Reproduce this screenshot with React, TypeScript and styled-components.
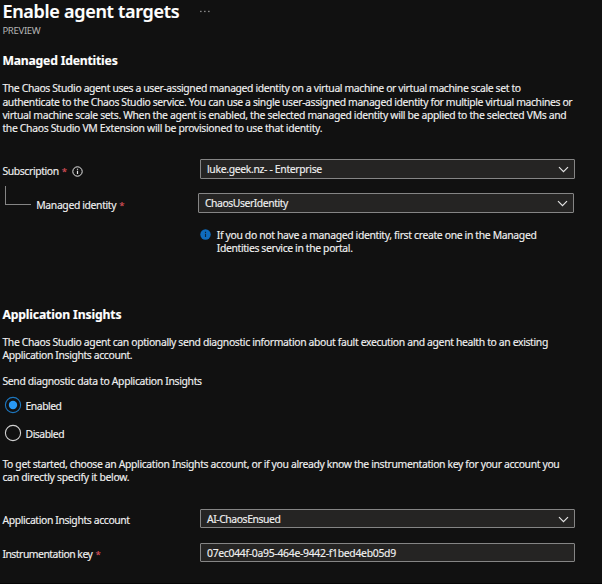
import React from 'react';
import styled, { createGlobalStyle } from 'styled-components';

const GlobalStyle = createGlobalStyle`
  * { box-sizing: border-box; }
  html, body { margin: 0; background: #111111; }
  body { overflow: hidden; }
`;

const Page = styled.main`
  display: flex;
  flex-direction: column;
  width: 602px;
  height: 584px;
  padding-left: 2.4px;
  overflow: hidden;
  background: #111111;
  border-bottom: 1px solid #060606;
  color: #f0f0f0;
  font-family: 'Noto Sans', 'Open Sans', sans-serif;
  font-size: 10.4px;
  line-height: 13.4px;
  -webkit-text-stroke: 0.15px currentColor;
`;

const Header = styled.header`
  display: flex;
  flex-direction: column;
  height: 53.1px;
`;

const TitleRow = styled.div`
  display: flex;
  align-items: center;
  gap: 20.5px;
  height: 22px;
`;

const Title = styled.h1`
  margin: 0;
  color: #ffffff;
  font-size: 18px;
  font-weight: 600;
  line-height: 22px;
  letter-spacing: -0.295px;
  white-space: nowrap;
`;

const Preview = styled.div`
  margin-top: 2px;
  color: #b4b4b4;
  font-size: 9.6px;
  line-height: 14px;
  letter-spacing: -0.34px;
  -webkit-text-stroke: 0;
`;

const Section = styled.section<{ $height: number }>`
  display: flex;
  flex-direction: column;
  flex: none;
  height: ${(p) => p.$height}px;
`;

const Heading = styled.h2<{ $tracking: number }>`
  margin: 0;
  color: #ffffff;
  font-size: 12.2px;
  font-weight: 700;
  line-height: 16px;
  letter-spacing: ${(p) => p.$tracking}px;
`;

const Paragraph = styled.p<{ $top: number }>`
  display: flex;
  flex-direction: column;
  margin: ${(p) => p.$top}px 0 0;
`;

const Line = styled.span<{ $tracking: number }>`
  letter-spacing: ${(p) => p.$tracking}px;
  white-space: nowrap;
`;

const Field = styled.div<{ $top: number; $indent?: boolean }>`
  display: grid;
  grid-template-columns: ${(p) => (p.$indent ? '195.6px 376px' : '197.6px 375px')};
  align-items: start;
  margin-top: ${(p) => p.$top}px;
`;

const Label = styled.label<{ $top: number }>`
  display: flex;
  align-items: flex-start;
  padding-top: ${(p) => p.$top}px;
`;

const Required = styled.span`
  margin-left: 3px;
  color: #d9505a;
  font-size: 9.6px;
`;

const InfoOutline = styled.svg`
  margin: 1px 0 0 4.5px;
`;

const Elbow = styled.span`
  flex: none;
  width: 26px;
  height: 19px;
  margin: -7px 5.3px 0 2.6px;
  border: solid #858585;
  border-width: 0 0 1px 1px;
`;

const Control = styled.div<{ $height: number }>`
  display: flex;
  align-items: flex-start;
  justify-content: space-between;
  height: ${(p) => p.$height}px;
  padding: 2.8px 5px 0 6px;
  border: 1px solid #858585;
  border-radius: 1px;
  background: #252423;
`;

const ChevronIcon = styled.svg`
  margin-top: -0.8px;
`;

const Hint = styled.div`
  display: flex;
  gap: 6.2px;
  margin: 15.6px 0 0 197.2px;
`;

const HintIcon = styled.svg`
  flex: none;
`;

const Radio = styled.div<{ $top: number }>`
  display: flex;
  align-items: center;
  gap: 3.2px;
  height: 18px;
  margin: ${(p) => p.$top}px 0 0 2px;
`;

const RadioText = styled.span`
  padding-top: 3px;
  letter-spacing: -0.49px;
`;

const Chevron = () => (
  <ChevronIcon width="11" height="14" viewBox="0 0 11 14" fill="none" stroke="#e4e4e4" strokeWidth="1.2">
    <path d="M1 5.2 5.5 9.7 10 5.2" />
  </ChevronIcon>
);

const RadioMark = ({ on }: { on?: boolean }) => (
  <svg width="18" height="18" viewBox="0 0 18 18">
    <circle cx="9" cy="9" r="7.6" fill="none" stroke={on ? '#1d76bd' : '#d0d0d0'} strokeWidth="1.1" />
    {on && <circle cx="9" cy="9" r="4.2" fill="#2899f5" />}
  </svg>
);

const Dots = () => (
  <svg width="10" height="4" viewBox="0 0 10 4" fill="#a0a0a0">
    <rect x="0.2" y="1.8" width="1.3" height="1.3" />
    <rect x="4.2" y="1.8" width="1.3" height="1.3" />
    <rect x="8.2" y="1.8" width="1.3" height="1.3" />
  </svg>
);

export default function App() {
  return (
    <>
      <GlobalStyle />
      <Page>
        <Header>
          <TitleRow>
            <Title>Enable agent targets</Title>
            <Dots />
          </TitleRow>
          <Preview>PREVIEW</Preview>
        </Header>

        <Section $height={254}>
          <Heading $tracking={-0.2}>Managed Identities</Heading>
          <Paragraph $top={13}>
            <Line $tracking={-0.367}>The Chaos Studio agent uses a user-assigned managed identity on a virtual machine or virtual machine scale set to</Line>
            <Line $tracking={-0.367}>authenticate to the Chaos Studio service. You can use a single user-assigned managed identity for multiple virtual machines or</Line>
            <Line $tracking={-0.34}>virtual machine scale sets. When the agent is enabled, the selected managed identity will be applied to the selected VMs and</Line>
            <Line $tracking={-0.317}>the Chaos Studio VM Extension will be provisioned to use that identity.</Line>
          </Paragraph>
          <Field $top={23.3}>
            <Label $top={6.1}>
              <Line $tracking={-0.38}>Subscription</Line>
              <Required>*</Required>
              <InfoOutline width="11" height="11" viewBox="0 0 11 11" fill="none" stroke="#e8e8e8">
                <circle cx="5.5" cy="5.5" r="4.7" strokeWidth="1" />
                <path d="M5.5 4.7v3.4M5.5 2.7v1.1" strokeWidth="1.2" />
              </InfoOutline>
            </Label>
            <Control $height={20}>
              <Line $tracking={-0.33}>luke.geek.nz- - Enterprise</Line>
              <Chevron />
            </Control>
          </Field>
          <Field $top={14} $indent>
            <Label $top={0}>
              <Elbow />
              <Label as="span" $top={6.1}>
                <Line $tracking={-0.36}>Managed identity</Line>
                <Required>*</Required>
              </Label>
            </Label>
            <Control $height={20}>
              <Line $tracking={-0.447}>ChaosUserIdentity</Line>
              <Chevron />
            </Control>
          </Field>
          <Hint>
            <HintIcon width="11" height="11" viewBox="0 0 11 11">
              <circle cx="5.5" cy="5.5" r="5.2" fill="#0f6cbd" />
              <path d="M5.5 4.8v3.2M5.5 2.8v1.1" stroke="#10263a" strokeWidth="1.1" />
            </HintIcon>
            <Paragraph $top={0}>
              <Line $tracking={-0.343}>If you do not have a managed identity, first create one in the Managed</Line>
              <Line $tracking={-0.363}>Identities service in the portal.</Line>
            </Paragraph>
          </Hint>
        </Section>

        <Section $height={270}>
          <Heading $tracking={-0.14}>Application Insights</Heading>
          <Paragraph $top={12.9}>
            <Line $tracking={-0.353}>The Chaos Studio agent can optionally send diagnostic information about fault execution and agent health to an existing</Line>
            <Line $tracking={-0.375}>Application Insights account.</Line>
          </Paragraph>
          <Paragraph $top={12.3}>
            <Line $tracking={-0.333}>Send diagnostic data to Application Insights</Line>
          </Paragraph>
          <Radio $top={7.4}>
            <RadioMark on />
            <RadioText>Enabled</RadioText>
          </Radio>
          <Radio $top={10.3}>
            <RadioMark />
            <RadioText>Disabled</RadioText>
          </Radio>
          <Paragraph $top={15.8}>
            <Line $tracking={-0.355}>To get started, choose an Application Insights account, or if you already know the instrumentation key for your account you</Line>
            <Line $tracking={-0.29}>can directly specify it below.</Line>
          </Paragraph>
          <Field $top={24.2}>
            <Label $top={5.1}>
              <Line $tracking={-0.379}>Application Insights account</Line>
            </Label>
            <Control $height={19}>
              <Line $tracking={-0.43}>AI-ChaosEnsued</Line>
              <Chevron />
            </Control>
          </Field>
          <Field $top={15}>
            <Label $top={5.1}>
              <Line $tracking={-0.49}>Instrumentation key</Line>
              <Required>*</Required>
            </Label>
            <Control $height={19}>
              <Line $tracking={-0.289}>07ec044f-0a95-464e-9442-f1bed4eb05d9</Line>
            </Control>
          </Field>
        </Section>
      </Page>
    </>
  );
}
